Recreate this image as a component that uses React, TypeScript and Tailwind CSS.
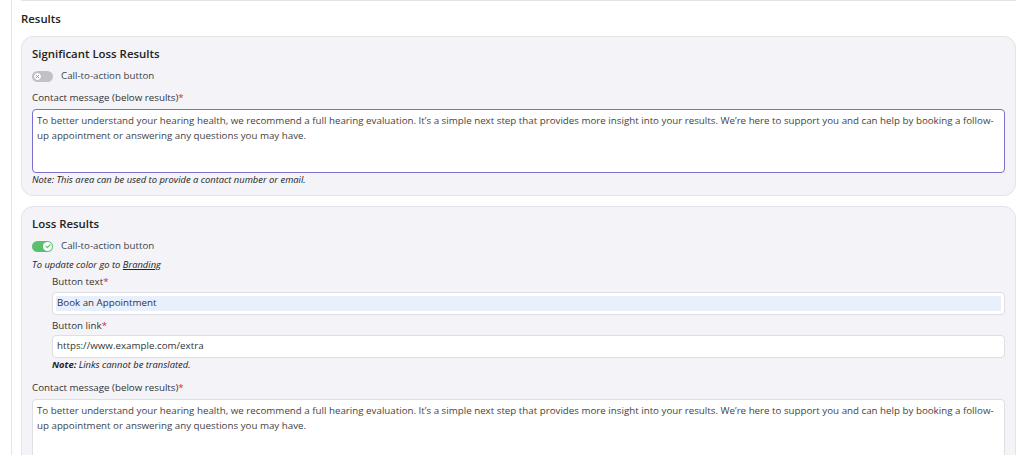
import type { ReactNode } from "react";

const MESSAGE =
  "To better understand your hearing health, we recommend a full hearing evaluation. It’s a simple next step that provides more insight into your results. We’re here to support you and can help by booking a follow-up appointment or answering any questions you may have.";

function Toggle({ on }: { on: boolean }) {
  return (
    <span
      className={`relative inline-flex h-[11px] w-[21px] shrink-0 items-center rounded-full ${
        on ? "bg-[#5cbf6e]" : "bg-[#c2c2c6]"
      }`}
    >
      <span
        className={`absolute top-[1px] flex h-[9px] w-[9px] items-center justify-center rounded-full bg-white ${
          on ? "left-[11px]" : "left-[1px] border border-[#b4b4b8]"
        }`}
      >
        {on ? (
          <svg viewBox="0 0 10 10" className="h-[8px] w-[8px]">
            <path d="M2.4 5.3 L4.3 7.1 L7.7 3.2" fill="none" stroke="#5cbf6e" strokeWidth="1.4" strokeLinecap="round" strokeLinejoin="round" />
          </svg>
        ) : (
          <svg viewBox="0 0 10 10" className="h-[7px] w-[7px]">
            <path d="M3.2 3.2 L6.8 6.8 M6.8 3.2 L3.2 6.8" fill="none" stroke="#8e8e93" strokeWidth="1.2" strokeLinecap="round" />
          </svg>
        )}
      </span>
    </span>
  );
}

function Label({ children }: { children: ReactNode }) {
  return (
    <p className="text-[9.75px] leading-[14px] text-[#333]">
      {children}
      <span className="text-[#e02424]">*</span>
    </p>
  );
}

function Card({ title, children }: { title: string; children: ReactNode }) {
  return (
    <section className="rounded-[12px] border border-[#e3e3e8] bg-[#f3f3f8] pb-[9px] pl-[10px] pr-[10px] pt-[9px]">
      <h3 className="text-[11.4px] font-semibold leading-[16px] text-[#222]">{title}</h3>
      {children}
    </section>
  );
}

function CtaRow({ on }: { on: boolean }) {
  return (
    <div className="mt-[7px] flex items-center gap-[8px]">
      <Toggle on={on} />
      <span className="text-[9.75px] leading-[14px] text-[#444]">Call-to-action button</span>
    </div>
  );
}

export default function App() {
  return (
    <div
      className="h-[455px] w-[1024px] overflow-hidden bg-white text-[#333]"
      style={{ fontFamily: '"Open Sans", "Liberation Sans", sans-serif' }}
    >
      <div className="ml-[11px] h-full border-l border-[#e4e4e8] pl-[9px] pr-[8px]">
        <div className="h-px w-full bg-[#e4e4e8]" />
        <h2 className="mt-[10px] text-[11.4px] font-semibold leading-[16px] text-[#222]">Results</h2>

        <div className="mt-[9px] flex flex-col gap-[10px]">
          <Card title="Significant Loss Results">
            <CtaRow on={false} />
            <div className="mt-[8px]">
              <Label>Contact message (below results)</Label>
            </div>
            <div className="mt-[4px] h-[64px] rounded-[4px] border border-[#7b70cc] bg-white px-[4px] py-[3px] text-[9.75px] leading-[15px] text-[#444]">
              {MESSAGE}
            </div>
            <p className="text-[9.4px] italic leading-[13px] text-[#222]">
              Note: This area can be used to provide a contact number or email.
            </p>
          </Card>

          <Card title="Loss Results">
            <CtaRow on={true} />
            <p className="mt-[5px] text-[9.4px] italic leading-[13px] text-[#222]">
              To update color go to <span className="underline">Branding</span>
            </p>
            <div className="ml-[20px]">
              <div className="mt-[4px]">
                <Label>Button text</Label>
              </div>
              <div className="mt-[3px] h-[23px] rounded-[4px] border border-[#dedee3] bg-white p-[3px]">
                <div className="flex h-full items-center bg-[#e8f0fe] px-[1px] text-[9.75px] text-[#333]">
                  Book an Appointment
                </div>
              </div>
              <div className="mt-[4px]">
                <Label>Button link</Label>
              </div>
              <div className="mt-[2px] flex h-[23px] items-center rounded-[4px] border border-[#dedee3] bg-white px-[4px] text-[9.75px] text-[#333]">
                https://www.example.com/extra
              </div>
              <p className="text-[9.4px] italic leading-[13px] text-[#222]">
                <span className="font-bold">Note:</span> Links cannot be translated.
              </p>
            </div>
            <div className="mt-[10px]">
              <Label>Contact message (below results)</Label>
            </div>
            <div className="mt-[4px] h-[64px] rounded-[4px] border border-[#dedee3] bg-white px-[4px] py-[3px] text-[9.75px] leading-[15px] text-[#444]">
              {MESSAGE}
            </div>
          </Card>
        </div>
      </div>
    </div>
  );
}
